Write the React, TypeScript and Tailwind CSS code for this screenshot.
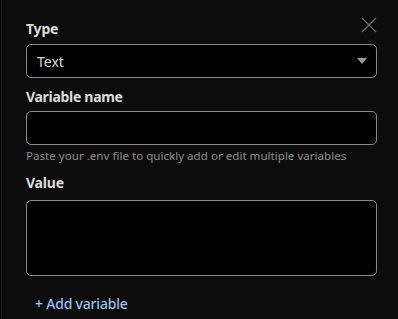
export default function App() {
    return (
        <div className="w-[398px] h-[319px] bg-[#0d0c0d] overflow-hidden flex" style={{ fontFamily: '"Noto Sans", sans-serif' }}>
            <div className="w-[1px] bg-[#1e1d1e] ml-[1px]"></div>
            <div className="flex-1 pl-[24px] pr-[21px] pt-[19px] relative">
                <button className="absolute right-[21px] top-[17px] text-[#6b6b6b]">
                    <svg width="16" height="16" viewBox="0 0 16 16" fill="none" stroke="currentColor" strokeWidth="1.3">
                        <path d="M1 1L15 15M15 1L1 15" />
                    </svg>
                </button>
                <label className="block text-[14px] font-bold text-[#dcdcdc] leading-[20px] tracking-[-0.2px]">Type</label>
                <div className="mt-[5px] h-[34px] rounded-[5px] border border-[#8a8a8a] bg-black flex items-center justify-between pl-[10px] pr-[9px]">
                    <span className="text-[14px] text-[#d8d8d8]">Text</span>
                    <svg width="10" height="6" viewBox="0 0 10 6"><path d="M0 0H10L5 6Z" fill="#9a9a9a" /></svg>
                </div>
                <label className="block mt-[9px] text-[14px] font-bold text-[#dcdcdc] leading-[20px] tracking-[-0.3px]">Variable name</label>
                <input className="mt-[4px] block w-full h-[34px] rounded-[5px] border border-[#8a8a8a] bg-black outline-none" />
                <p className="mt-[3px] text-[11.6px] text-[#8c8c8c] leading-[16px]">Paste your .env file to quickly add or edit multiple variables</p>
                <label className="block mt-[9px] text-[14px] font-bold text-[#dcdcdc] leading-[20px] tracking-[-0.2px]">Value</label>
                <textarea className="mt-[7px] block w-full h-[76px] rounded-[5px] border border-[#8a8a8a] bg-black outline-none resize-none" />
                <button className="mt-[17px] ml-[9px] text-[14px] text-[#9cc0f0] font-medium tracking-[-0.2px]">+ Add variable</button>
            </div>
        </div>
    )
}
